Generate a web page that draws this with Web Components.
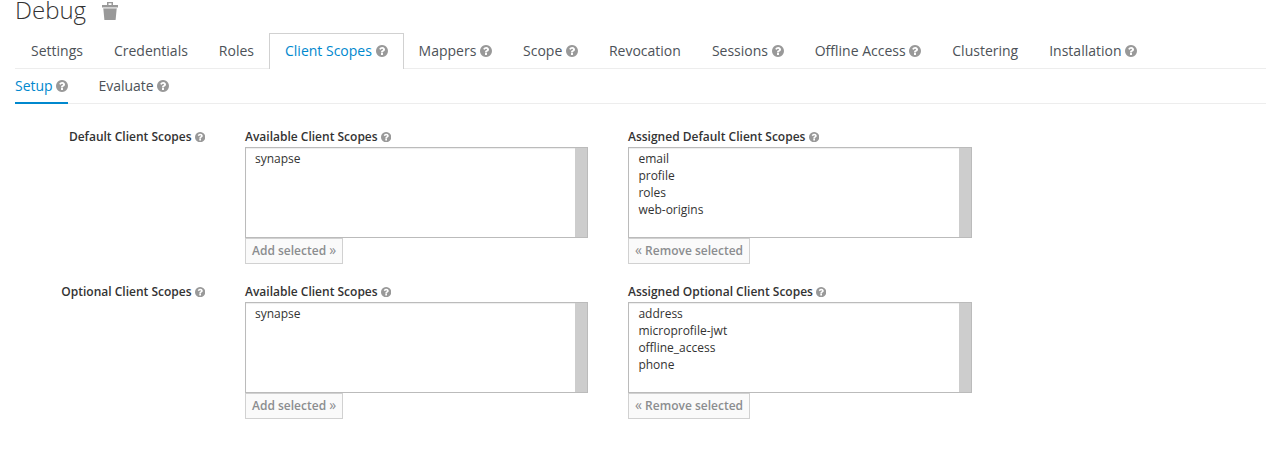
<!DOCTYPE html>
<html lang="en">
<head>
<meta charset="utf-8">
<title>Debug - Client Scopes</title>
<style>
body { margin: 0; background: #fff; color: #333; font: 12px/17px "Open Sans", sans-serif; overflow: hidden; }
</style>
</head>
<body>
<client-page></client-page>
<script>
const define = (name, html) => {
  const template = document.createElement('template');
  template.innerHTML = html;
  customElements.define(name, class extends HTMLElement {
    constructor() {
      super();
      this.attachShadow({ mode: 'open' }).append(template.content.cloneNode(true));
    }
  });
};

define('help-icon', `
<style>
:host { display: inline-block; width: .857em; height: .857em; margin-left: .265em; vertical-align: -.1em; color: #999; }
svg { display: block; width: 100%; height: 100%; }
</style>
<svg viewBox="128 128 1536 1536" fill="currentColor"><path d="M1024 1376v-192q0-14-9-23t-23-9h-192q-14 0-23 9t-9 23v192q0 14 9 23t23 9h192q14 0 23-9t9-23zm256-672q0-88-55.500-163t-138.500-116-170-41q-243 0-371 213-15 24 8 42l132 100q7 6 19 6 16 0 25-12 53-68 86-92 34-24 86-24 48 0 85.500 26t37.500 59q0 38-20 61t-68 45q-63 28-115.500 86.500t-52.500 125.500v36q0 14 9 23t23 9h192q14 0 23-9t9-23q0-19 21.500-49.500t54.500-49.500q32-18 49-28.500t46-35 44.500-48 28-60.500 12.500-81zm384 192q0 209-103 385.500t-279.500 279.500-385.500 103-385.500-103-279.500-279.500-103-385.500 103-385.500 279.500-279.500 385.500-103 385.500 103 279.500 279.500 103 385.500z"/></svg>`);

define('page-title', `
<style>
:host { display: flex; height: 33px; box-sizing: border-box; font-size: 24px; line-height: 20px; font-weight: 300; color: #333; }
svg { display: block; width: 16px; height: 18px; margin: 2px 0 0 16px; }
</style>
<slot></slot>
<svg viewBox="0 0 16 18" fill="#999"><path d="M5 3V0h6v3h5v2.500H0V3zM6.500 1.300V3h3V1.300z" fill-rule="evenodd"/><path d="M1 5.500h14v1H1z" fill="#ddd"/><path d="M1.300 6.500h13.400L13.600 18H2.400z"/></svg>`);

define('nav-tab', `
<style>
:host { display: block; box-sizing: border-box; height: 36px; margin-right: -1px; padding: 5px 15px 0; border: 1px solid transparent; border-bottom: 0; font-size: 14px; line-height: 23px; color: #4d5258; white-space: nowrap; }
:host([active]) { color: #0088ce; border-color: #d1d1d1; background: #fff; }
</style>
<slot></slot>`);

define('tab-bar', `
<style>
:host { display: flex; height: 35px; border-bottom: 1px solid #ededed; }
</style>
<slot></slot>`);

define('sub-tab', `
<style>
:host { display: block; box-sizing: border-box; height: 35px; padding-top: 5px; font-size: 14px; line-height: 23px; color: #4d5258; white-space: nowrap; }
:host([active]) { color: #0088ce; border-bottom: 2px solid #0088ce; }
</style>
<slot></slot>`);

define('sub-tab-bar', `
<style>
:host { display: flex; gap: 30px; height: 34px; border-bottom: 1px solid #ededed; }
</style>
<slot></slot>`);

define('scope-option', `
<style>
:host { display: block; height: 17px; line-height: 17px; padding-left: var(--option-inset, 9px); color: #333; }
</style>
<slot></slot>`);

define('scope-list', `
<style>
:host { display: block; }
.head { height: 19px; line-height: 17px; font-weight: 600; }
.box { display: flex; height: 91px; box-sizing: border-box; border: 1px solid #bbb; box-shadow: inset 0 1px 1px rgba(3,3,3,.075); }
.items { flex: 1; padding-top: 2px; }
.track { width: 12px; background: #cdcdcd; }
button { display: block; height: 26px; margin: 0; padding: 0 6px; border: 1px solid #d1d1d1; border-radius: 0; background: #fafafa; color: #8b8d8f; font: 600 12px/24px "Open Sans", sans-serif; white-space: nowrap; }
</style>
<div class="head"><slot name="label"></slot></div>
<div class="box"><div class="items"><slot></slot></div><div class="track"></div></div>
<button disabled><slot name="action"></slot></button>`);

define('scope-row', `
<style>
:host { display: grid; grid-template-columns: 190px 343px 344px; column-gap: 40px; height: 155px; box-sizing: border-box; }
.name { text-align: right; font-weight: 600; }
</style>
<div class="name"><slot name="name"></slot></div>
<slot></slot>`);

define('client-page', `
<style>
:host { display: block; height: 469px; padding-left: 15px; box-sizing: border-box; }
form { margin: 0; padding-top: 24px; }
.assigned { --option-inset: 9.400px; }
.arrow { display: inline-block; width: 7px; font-size: 14px; line-height: 14px; font-weight: 400; }
</style>
<page-title>Debug</page-title>
<tab-bar>
  <nav-tab>Settings</nav-tab><nav-tab>Credentials</nav-tab><nav-tab>Roles</nav-tab><nav-tab active>Client Scopes<help-icon></help-icon></nav-tab><nav-tab>Mappers<help-icon></help-icon></nav-tab><nav-tab>Scope<help-icon></help-icon></nav-tab><nav-tab>Revocation</nav-tab><nav-tab>Sessions<help-icon></help-icon></nav-tab><nav-tab>Offline Access<help-icon></help-icon></nav-tab><nav-tab>Clustering</nav-tab><nav-tab>Installation<help-icon></help-icon></nav-tab>
</tab-bar>
<sub-tab-bar>
  <sub-tab active>Setup<help-icon></help-icon></sub-tab><sub-tab>Evaluate<help-icon></help-icon></sub-tab>
</sub-tab-bar>
<form>
  <scope-row>
    <span slot="name">Default Client Scopes<help-icon></help-icon></span>
    <scope-list><span slot="label">Available Client Scopes<help-icon></help-icon></span>
      <scope-option>synapse</scope-option>
      <span slot="action">Add selected <span class="arrow">»</span></span></scope-list>
    <scope-list class="assigned"><span slot="label">Assigned Default Client Scopes<help-icon></help-icon></span>
      <scope-option>email</scope-option><scope-option>profile</scope-option><scope-option>roles</scope-option><scope-option>web-origins</scope-option>
      <span slot="action"><span class="arrow">«</span> Remove selected</span></scope-list>
  </scope-row>
  <scope-row>
    <span slot="name">Optional Client Scopes<help-icon></help-icon></span>
    <scope-list><span slot="label">Available Client Scopes<help-icon></help-icon></span>
      <scope-option>synapse</scope-option>
      <span slot="action">Add selected <span class="arrow">»</span></span></scope-list>
    <scope-list class="assigned"><span slot="label">Assigned Optional Client Scopes<help-icon></help-icon></span>
      <scope-option>address</scope-option><scope-option>microprofile-jwt</scope-option><scope-option>offline_access</scope-option><scope-option>phone</scope-option>
      <span slot="action"><span class="arrow">«</span> Remove selected</span></scope-list>
  </scope-row>
</form>`);
</script>
</body>
</html>
